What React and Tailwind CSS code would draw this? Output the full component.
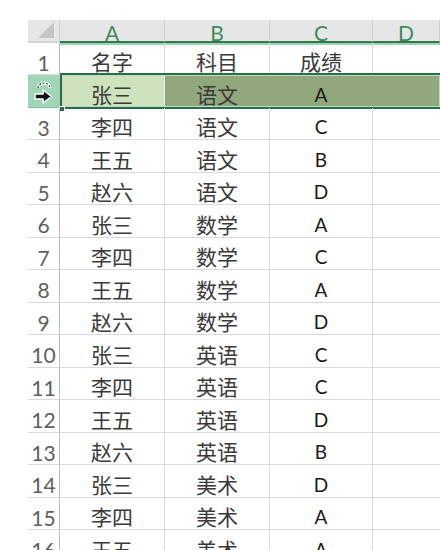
import React from "react";

const rows = [
  ["名字", "科目", "成绩"],
  ["张三", "语文", "A"],
  ["李四", "语文", "C"],
  ["王五", "语文", "B"],
  ["赵六", "语文", "D"],
  ["张三", "数学", "A"],
  ["李四", "数学", "C"],
  ["王五", "数学", "A"],
  ["赵六", "数学", "D"],
  ["张三", "英语", "C"],
  ["李四", "英语", "C"],
  ["王五", "英语", "D"],
  ["赵六", "英语", "B"],
  ["张三", "美术", "D"],
  ["李四", "美术", "A"],
  ["王五", "美术", "A"],
];

const cjk = { fontFamily: '"Noto Sans CJK SC", sans-serif' };
const lat = { fontFamily: 'Lato, "Open Sans", sans-serif' };

function Cursor() {
  return (
    <svg width="24" height="28" viewBox="0 0 24 28">
      <path d="M6 10 A6 5 0 0 1 18 10" fill="none" stroke="#ffffff" strokeWidth="3" />
      <path d="M6 10 A6 5 0 0 1 18 10" fill="none" stroke="#333" strokeWidth="1.2" strokeDasharray="2 1.5" />
      <path d="M3 16 H11 V12 L19.5 18.5 L11 25 V21 H3 Z" fill="#111" stroke="#ffffff" strokeWidth="1.5" strokeLinejoin="round" />
    </svg>
  );
}

export default function App() {
  return (
    <div className="w-[440px] h-[550px] overflow-hidden bg-white relative">
      <div className="pt-[20px] pl-[28px]">
        {/* header */}
        <div className="flex h-[23px]">
          <div className="w-[32px] shrink-0 bg-[#e6e6e6] border-r border-[#cfcfcf] border-b-2 border-b-[#d6d6d6] relative overflow-hidden">
            <div className="absolute right-[5px] bottom-[3px] w-0 h-0 border-l-[16px] border-l-transparent border-b-[16px] border-b-[#c4c4c4]" />
          </div>
          {["A", "B", "C", "D"].map((c, i) => (
            <div
              key={c}
              className={`${i === 3 ? "flex-1" : i === 2 ? "w-[103px]" : "w-[105px]"} shrink-0 bg-[#e6e6e6] border-r border-[#cfcfcf] border-b-2 border-b-[#2f7a4d] flex items-center justify-center text-[21px] leading-none text-[#3f8a5b] pt-[3px] shadow-[0_2px_0_#9fd3b4]`}
              style={lat}
            >
              {c}
            </div>
          ))}
        </div>
        {rows.map((r, idx) => {
          const n = idx + 1;
          const sel = n === 2;
          const h = idx % 2 === 0 ? "h-[32px]" : "h-[33px]";
          return (
            <div key={n} className={`flex ${h} relative`}>
              <div
                className={`w-[32px] shrink-0 flex items-center justify-center border-r border-[#bfbfbf] border-b ${
                  sel ? "bg-[#9fd6b6] border-b-[#7fbf9a] pt-[2px]" : "border-b-[#dadada] pt-[8px]"
                } text-[21px] text-[#606060]`}
                style={lat}
              >
                {sel ? <Cursor /> : n}
              </div>
              <div
                className={`w-[105px] shrink-0 flex items-center justify-center pt-[7px] border-r ${sel ? "bg-[#cde3be] border-r-[#e6f0de]" : "border-r-[#dadada]"} border-b border-b-[#dadada] text-[21px] text-[#3a3a3a]`}
                style={cjk}
              >
                {r[0]}
              </div>
              <div
                className={`w-[105px] shrink-0 flex items-center justify-center pt-[7px] border-r ${sel ? "bg-[#91a87d] border-r-[#91a87d]" : "border-r-[#dadada]"} border-b border-b-[#dadada] text-[21px] text-[#3a3a3a]`}
                style={cjk}
              >
                {r[1]}
              </div>
              <div
                className={`w-[103px] shrink-0 flex items-center justify-center border-r ${sel ? "bg-[#91a87d] border-r-[#91a87d]" : "border-r-[#dadada]"} border-b border-b-[#dadada] ${
                  n === 1 ? "text-[21px] text-[#3a3a3a] pt-[7px]" : "text-[19px] text-[#1a1a1a] pt-[8px]"
                }`}
                style={n === 1 ? cjk : lat}
              >
                {r[2]}
              </div>
              <div className={`flex-1 border-b border-b-[#dadada] ${sel ? "bg-[#91a87d]" : ""}`} />
              {sel && (
                <>
                  <div className="absolute left-[32px] right-0 top-[-2px] bottom-[-1px] border-2 border-r-0 border-[#2a6e45] shadow-[inset_0_0_0_1px_#b9dcc6] pointer-events-none" />
                  <div className="absolute left-[31px] bottom-[-4px] w-[6px] h-[6px] bg-[#2a6e45] border border-white pointer-events-none" />
                </>
              )}
            </div>
          );
        })}
      </div>
    </div>
  );
}
